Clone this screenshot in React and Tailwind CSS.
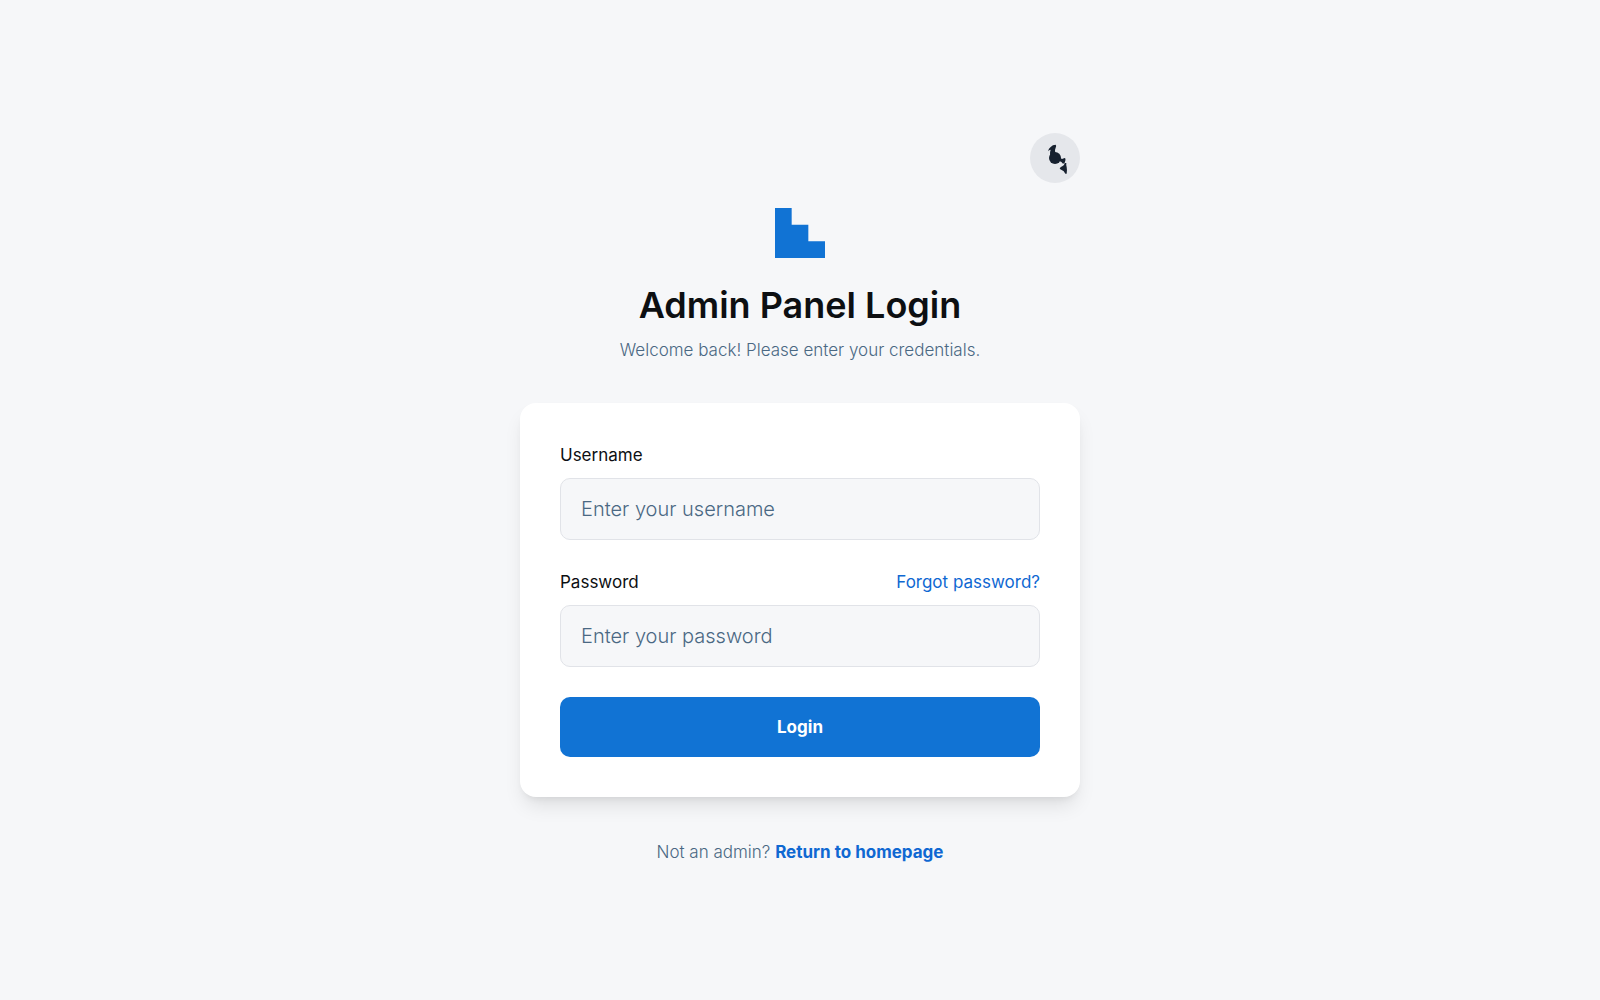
function ThemeIcon() {
  return (
    <svg viewBox="0 0 150 150" className="size-full" fill="#17212f" aria-hidden="true">
      <circle cx="75" cy="75" r="18" />
      <path d="M54 55Q56 46 62 42Q68 35 77 35Q80 38 77 44Q73 50 76 62L60 66Q59 58 62 50Q57 50 54 55Z" />
      <path d="M90 74L96 78L104 75Q108 76 106 83Q105 91 99 92Q95 86 88 84Z" />
      <path d="M89 106Q92 101 98 99Q103 97 104 90L109 90Q108 97 110 102Q112 112 110 122L106 122Q102 113 95 111Q90 110 89 106Z" />
    </svg>
  );
}

function Logo() {
  return (
    <svg viewBox="0 0 48 48" className="size-[50px]" fill="#1173d4" aria-hidden="true">
      <path d="M0 0H16V16H32V32H48V48H0Z" />
    </svg>
  );
}

const inputClass =
  "mt-2.5 block h-[62px] w-full rounded-[10px] border border-[#e1e3e8] bg-[#f6f7f9] px-5 text-[20px] font-light text-[#0d0f12] outline-none placeholder:text-[#4a6883] placeholder:opacity-100 focus:border-[#1173d4]";

export default function App() {
  return (
    <main className="flex min-h-screen flex-col items-center justify-center bg-[#f6f7f9] p-5 font-['Inter',sans-serif] text-[17px] leading-[25px] text-[#0d0f12]">
      <div className="w-full max-w-[560px]">
        <div className="flex justify-end">
          <button type="button" aria-label="Toggle theme" className="size-[50px] rounded-full bg-[#e5e7eb]">
            <ThemeIcon />
          </button>
        </div>
        <header className="mt-[25px] flex flex-col items-center text-center">
          <Logo />
          <h1 className="mt-[25px] text-[36px] leading-[45px] font-semibold">Admin Panel Login</h1>
          <p className="mt-2.5 font-light text-[#4a6883]">Welcome back! Please enter your credentials.</p>
        </header>
        <form
          className="mt-10 rounded-2xl bg-white p-10 shadow-[0_12px_20px_-4px_rgba(0,0,0,0.1),0_5px_8px_-5px_rgba(0,0,0,0.1)]"
          onSubmit={(event) => event.preventDefault()}
        >
          <label htmlFor="username" className="block">Username</label>
          <input id="username" type="text" placeholder="Enter your username" className={inputClass} />
          <div className="mt-[30px] flex items-center justify-between">
            <label htmlFor="password">Password</label>
            <a href="#forgot" className="text-[#0f68d2]">Forgot password?</a>
          </div>
          <input id="password" type="password" placeholder="Enter your password" className={inputClass} />
          <button type="submit" className="mt-[30px] block h-[60px] w-full rounded-[10px] bg-[#1173d4] font-bold text-white">
            Login
          </button>
        </form>
        <p className="mt-10 text-center leading-[30px] font-light text-[#4a6883]">
          Not an admin? <a href="#home" className="font-bold text-[#0f68d2]">Return to homepage</a>
        </p>
      </div>
    </main>
  );
}
